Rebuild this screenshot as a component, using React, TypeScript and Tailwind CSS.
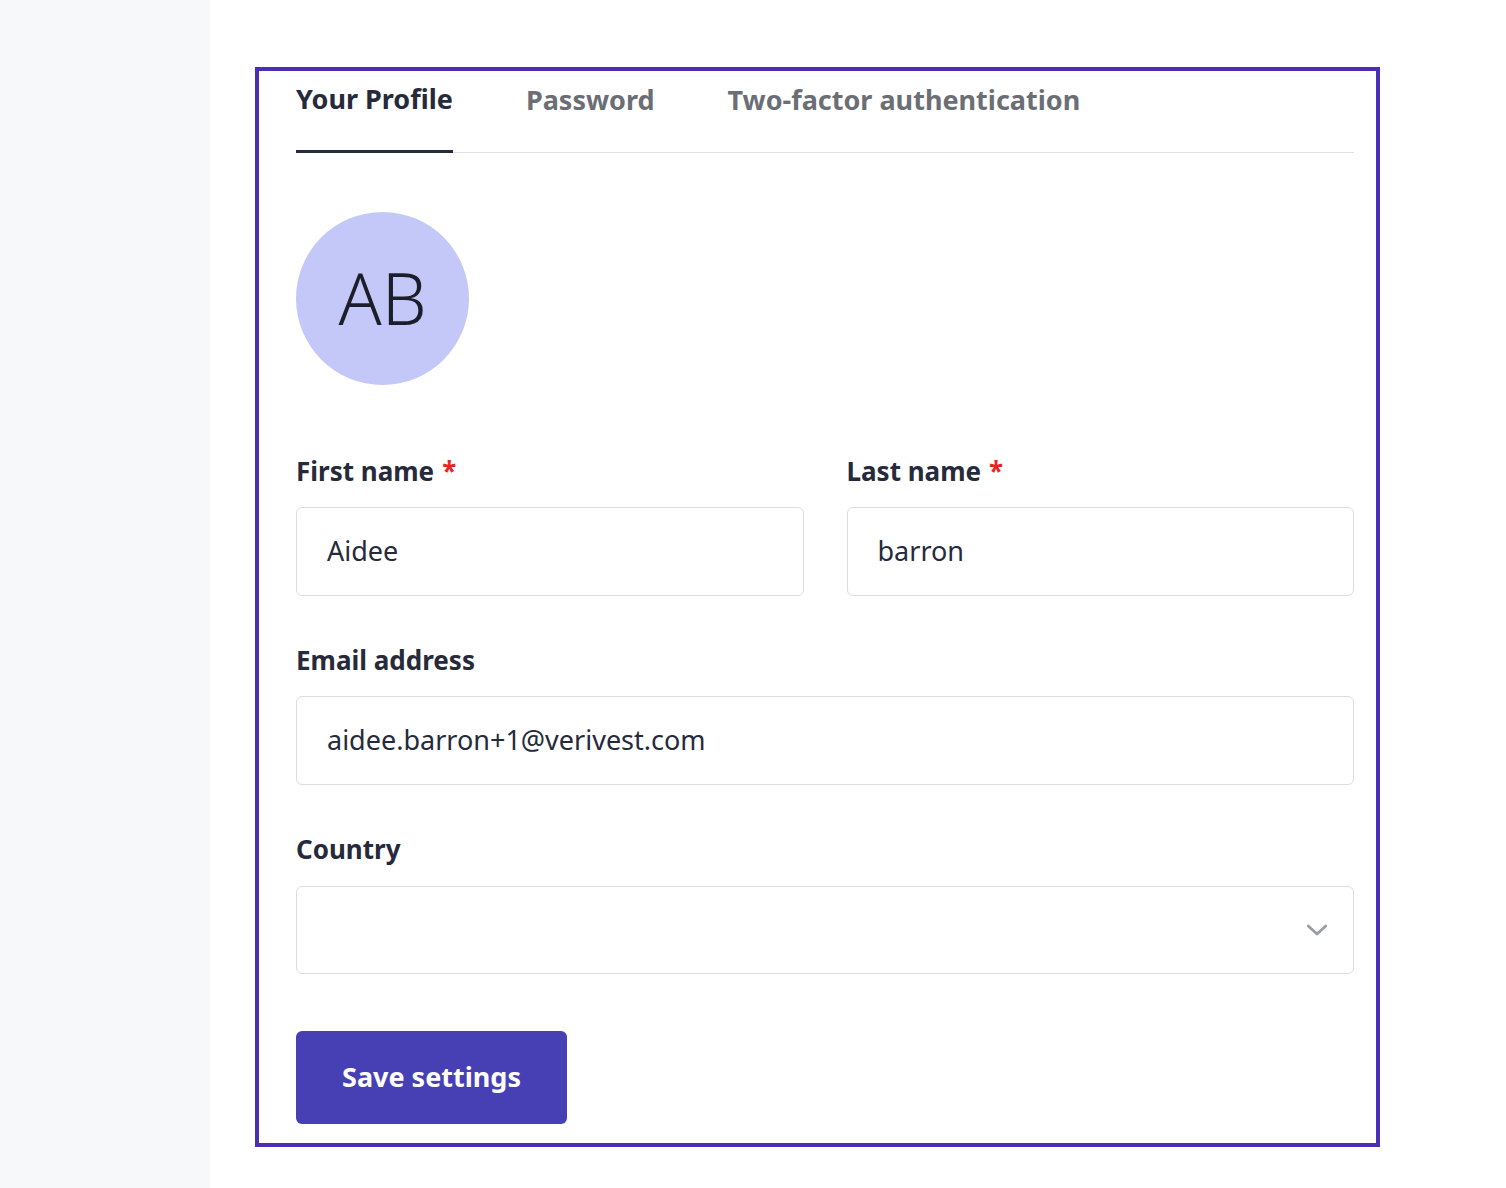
import React from "react";

function Field({ label, required, value }: { label: string; required?: boolean; value: string }) {
  return (
    <div className="flex flex-col">
      <label className="text-[26px] font-bold text-[#262a3b] leading-[32px] mb-[20px]">
        {label}
        {required && <span className="text-[#e5261e] ml-[8px]">*</span>}
      </label>
      <div className="h-[89px] border border-[#dcdde1] rounded-[6px] flex items-center pl-[30px] text-[27px] text-[#262a3b]">
        {value}
      </div>
    </div>
  );
}

export default function App() {
  return (
    <div className="flex min-h-[1188px] bg-white" style={{ fontFamily: "'Noto Sans', Lato, sans-serif" }}>
      <div className="w-[210px] bg-[#f7f8fa] shrink-0" />
      <div className="pl-[45px] pt-[67px]">
        <div className="w-[1125px] border-[4px] border-[#4c2db5] pl-[37px] pr-[22px] pb-[19px]">
          <div className="flex gap-[73px] border-b border-[#dedfe2] h-[82px]">
            <div className="flex items-center text-[27px] font-bold text-[#262a3b] border-b-[3px] border-[#262a3b] -mb-px pb-[22px]">
              Your Profile
            </div>
            <div className="flex items-center text-[27px] font-bold text-[#6b6e75] pb-[22px]">Password</div>
            <div className="flex items-center text-[27px] font-bold text-[#6b6e75] pb-[22px]">Two-factor authentication</div>
          </div>

          <div className="mt-[59px] w-[173px] h-[173px] rounded-full bg-[#c4c8f8] flex items-center justify-center text-[71px] font-light text-[#1c1f2a]">
            AB
          </div>

          <div className="mt-[70px] grid grid-cols-2 gap-[43px]">
            <Field label="First name" required value="Aidee" />
            <Field label="Last name" required value="barron" />
          </div>

          <div className="mt-[48px]">
            <Field label="Email address" value="aidee.barron+1@verivest.com" />
          </div>

          <div className="mt-[48px] flex flex-col">
            <label className="text-[26px] font-bold text-[#262a3b] leading-[32px] mb-[21px]">Country</label>
            <div className="h-[88px] border border-[#dcdde1] rounded-[6px] flex items-center justify-end pr-[22px]">
              <svg width="28" height="28" viewBox="0 0 24 24" fill="none" stroke="#9a9ca3" strokeWidth="2.3" strokeLinecap="round" strokeLinejoin="round">
                <path d="M4.5 8.5l7.5 7 7.5-7" />
              </svg>
            </div>
          </div>

          <button className="mt-[57px] w-[271px] h-[93px] bg-[#4740b4] rounded-[6px] text-white text-[27px] font-bold">
            Save settings
          </button>
        </div>
      </div>
    </div>
  );
}
